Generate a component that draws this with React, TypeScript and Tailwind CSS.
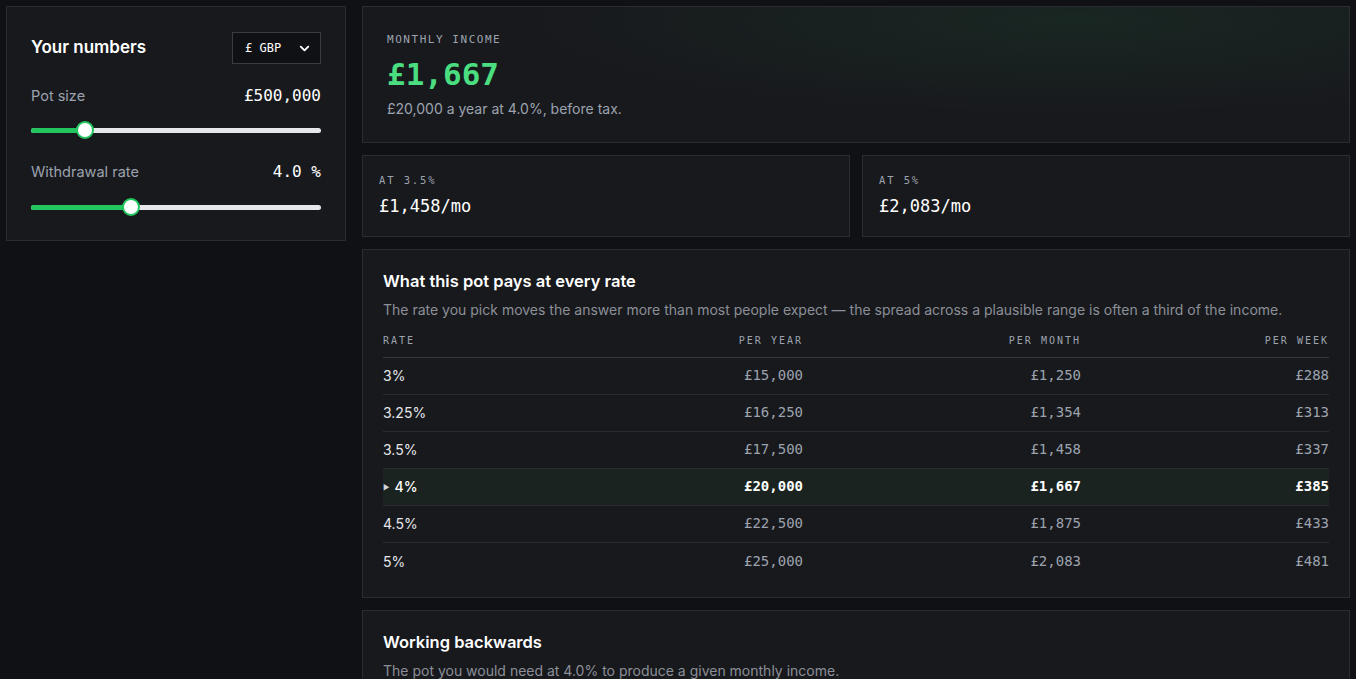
import { ChevronDown } from 'lucide-react';

const mono = "font-['DejaVu_Sans_Mono','Liberation_Mono',monospace]";
const sans = "font-['Inter','Noto_Sans',sans-serif]";

const rows = [
  { rate: '3%', year: '£15,000', month: '£1,250', week: '£288' },
  { rate: '3.25%', year: '£16,250', month: '£1,354', week: '£313' },
  { rate: '3.5%', year: '£17,500', month: '£1,458', week: '£337' },
  { rate: '4%', year: '£20,000', month: '£1,667', week: '£385', active: true },
  { rate: '4.5%', year: '£22,500', month: '£1,875', week: '£433' },
  { rate: '5%', year: '£25,000', month: '£2,083', week: '£481' },
];

function Slider({ pct }: { pct: number }) {
  return (
    <div className="relative h-4 flex items-center">
      <div className="h-[5px] w-full rounded-full bg-[#e5e7eb]">
        <div className="h-full rounded-full bg-[#22c55e]" style={{ width: `${pct}%` }} />
      </div>
      <div
        className="absolute w-[18px] h-[18px] -ml-[9px] rounded-full bg-white border-2 border-[#22c55e]"
        style={{ left: `${pct}%` }}
      />
    </div>
  );
}

export default function App() {
  return (
    <div className={`min-h-screen bg-[#101115] ${sans} flex gap-4 p-[6px] items-start`}>
      {/* sidebar */}
      <aside className="w-[340px] shrink-0 bg-[#18191d] border border-[#2a2c31] px-6 pt-[25px] pb-[25px]">
        <div className="flex items-center justify-between">
          <h2 className="text-[17px] font-semibold text-white">Your numbers</h2>
          <div className={`w-[89px] h-[32px] flex items-center justify-between pl-3 pr-2 bg-[#101115] border border-[#3a3c42] text-white text-[12px] ${mono}`}>
            <span>£ GBP</span>
            <ChevronDown size={15} strokeWidth={3} />
          </div>
        </div>
        <div className="mt-[20px] flex items-center justify-between">
          <span className="text-[14.5px] text-[#9ca3af]">Pot size</span>
          <span className={`text-[16px] text-white ${mono}`}>£500,000</span>
        </div>
        <div className="mt-[14px]">
          <Slider pct={18.6} />
        </div>
        <div className="mt-[22px] flex items-center justify-between">
          <span className="text-[14.5px] text-[#9ca3af]">Withdrawal rate</span>
          <span className={`text-[16px] text-white ${mono}`}>4.0 %</span>
        </div>
        <div className="mt-[15px]">
          <Slider pct={34.5} />
        </div>
      </aside>

      {/* main */}
      <main className="flex-1 flex flex-col gap-3">
        <section className="h-[137px] border border-[#2a2c31] bg-[#18191d] bg-[radial-gradient(ellipse_at_72%_10%,rgba(34,197,94,0.08),transparent_55%)] px-6 pt-[25px]">
          <div className={`text-[11px] tracking-[0.14em] text-[#9ca3af] ${mono}`}>MONTHLY INCOME</div>
          <div className={`mt-[6px] text-[31px] leading-[38px] font-bold text-[#4ade80] ${mono}`}>£1,667</div>
          <div className="mt-[5px] text-[14px] text-[#9ca3af]">£20,000 a year at 4.0%, before tax.</div>
        </section>

        <div className="grid grid-cols-2 gap-3">
          {[
            { l: 'AT 3.5%', v: '£1,458/mo' },
            { l: 'AT 5%', v: '£2,083/mo' },
          ].map((c) => (
            <div key={c.l} className="h-[82px] border border-[#2a2c31] bg-[#18191d] px-4 pt-[17px]">
              <div className={`text-[10.5px] tracking-[0.18em] text-[#9ca3af] ${mono}`}>{c.l}</div>
              <div className={`mt-[5px] text-[17px] text-white ${mono}`}>{c.v}</div>
            </div>
          ))}
        </div>

        <section className="border border-[#2a2c31] bg-[#18191d] px-5 pt-[19px] pb-[17px]">
          <h3 className="text-[16.5px] font-semibold text-white">What this pot pays at every rate</h3>
          <p className="mt-[5px] text-[14px] text-[#8b8f97]">
            The rate you pick moves the answer more than most people expect — the spread across a plausible range is often a third of the income.
          </p>
          <div className="mt-[13px] w-[946px]">
            <div className={`grid grid-cols-[220px_200px_278px_248px] pb-[9px] border-b border-[#34363c] text-[10px] tracking-[0.2em] text-[#9ca3af] ${mono}`}>
              <span>RATE</span>
              <span className="text-right">PER YEAR</span>
              <span className="text-right">PER MONTH</span>
              <span className="text-right">PER WEEK</span>
            </div>
            {rows.map((r) => (
              <div
                key={r.rate}
                className={`grid grid-cols-[220px_200px_278px_248px] h-[37px] items-center border-b last:border-b-0 border-[#2a2c31] ${r.active ? 'bg-[#1a231f]' : ''}`}
              >
                <span className={`text-[14px] ${r.active ? 'text-white font-medium' : 'text-[#e5e7eb]'}`}>
                  {r.active && <span className="text-[7px] text-[#d1d5db] mr-[5px] align-middle">▶</span>}
                  {r.rate}
                </span>
                {[r.year, r.month, r.week].map((v, i) => (
                  <span
                    key={i}
                    className={`text-right text-[14px] ${mono} ${r.active ? 'text-white font-bold' : 'text-[#9ca3af]'}`}
                  >
                    {v}
                  </span>
                ))}
              </div>
            ))}
          </div>
        </section>

        <section className="border border-[#2a2c31] bg-[#18191d] px-5 pt-[19px] pb-8">
          <h3 className="text-[16.5px] font-semibold text-white">Working backwards</h3>
          <p className="mt-[5px] text-[14px] text-[#8b8f97]">The pot you would need at 4.0% to produce a given monthly income.</p>
        </section>
      </main>
    </div>
  );
}
